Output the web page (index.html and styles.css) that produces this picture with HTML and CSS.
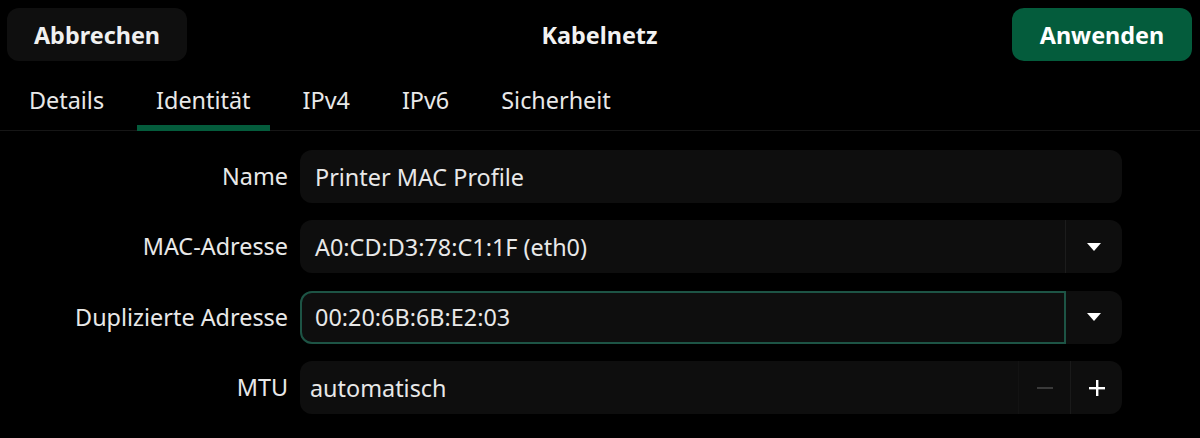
FILE: index.html
```html
<!DOCTYPE html>
<html lang="de">
<head>
<meta charset="utf-8">
<title>Kabelnetz</title>
<link rel="stylesheet" href="styles.css">
</head>
<body>
<div class="window">
  <header class="headerbar">
    <button class="btn btn-cancel">Abbrechen</button>
    <div class="title">Kabelnetz</div>
    <button class="btn btn-apply">Anwenden</button>
  </header>
  <nav class="tabs">
    <div class="tab">Details</div>
    <div class="tab active">Identität</div>
    <div class="tab">IPv4</div>
    <div class="tab">IPv6</div>
    <div class="tab">Sicherheit</div>
  </nav>
  <main class="form">
    <label class="label">Name</label>
    <div class="field"><span class="entry-text">Printer MAC Profile</span></div>

    <label class="label">MAC-Adresse</label>
    <div class="combo">
      <div class="combo-entry"><span class="entry-text">A0:CD:D3:78:C1:1F (eth0)</span></div>
      <div class="combo-btn"><span class="arrow"></span></div>
    </div>

    <label class="label">Duplizierte Adresse</label>
    <div class="combo">
      <div class="combo-entry focused"><span class="entry-text">00:20:6B:6B:E2:03</span></div>
      <div class="combo-btn"><span class="arrow"></span></div>
    </div>

    <label class="label">MTU</label>
    <div class="spin">
      <div class="spin-entry"><span class="entry-text">automatisch</span></div>
      <div class="spin-btn disabled">
        <svg width="16" height="16" viewBox="0 0 16 16"><rect x="0" y="7" width="16" height="2" fill="#3a3a3a"/></svg>
      </div>
      <div class="spin-btn">
        <svg width="16" height="16" viewBox="0 0 16 16"><rect x="0" y="7" width="16" height="2.4" fill="#ffffff"/><rect x="7" y="0" width="2.4" height="16" fill="#ffffff"/></svg>
      </div>
    </div>
  </main>
</div>
</body>
</html>
```

FILE: styles.css
```css
* { box-sizing: border-box; }
html, body {
  margin: 0;
  padding: 0;
  background: #000;
}
body {
  font-family: "Noto Sans", "Open Sans", sans-serif;
  color: #e8e8e8;
  font-size: 23.4px;
  width: 1200px;
  height: 438px;
  overflow: hidden;
}
.window {
  display: flex;
  flex-direction: column;
}
.headerbar {
  display: flex;
  align-items: center;
  justify-content: space-between;
  padding: 8px 8px 0 7px;
  height: 61px;
}
.btn {
  font-family: inherit;
  font-size: 23.4px;
  font-weight: 700;
  border: none;
  border-radius: 12px;
  height: 53px;
  width: 180px;
  color: #fff;
  padding: 0;
  cursor: pointer;
}
.btn-cancel {
  background: #0f0f0f;
  color: #f0f0f0;
}
.btn-apply {
  background: #045c3c;
}
.title {
  font-weight: 700;
  font-size: 23.4px;
  color: #f2f2f2;
}
.tabs {
  display: flex;
  gap: 14px;
  padding: 10px 0 0 10px;
  border-bottom: 1px solid #161616;
  height: 70px;
}
.tab {
  height: 60px;
  line-height: 58px;
  padding: 0 19px;
  border-bottom: 6px solid transparent;
  color: #e8e8e8;
}
.tab.active {
  border-bottom-color: #045c3c;
}
.form {
  display: grid;
  grid-template-columns: 288px 822px;
  grid-auto-rows: 53px;
  column-gap: 12px;
  row-gap: 17.4px;
  padding-top: 19px;
}
.label {
  text-align: right;
  line-height: 53px;
  color: #e8e8e8;
}
.field, .combo, .spin {
  height: 53px;
  border-radius: 12px;
  background: #0e0e0e;
  display: flex;
  align-items: center;
}
.field {
  padding-left: 15px;
}
.combo-entry {
  flex: 1;
  height: 53px;
  display: flex;
  align-items: center;
  padding-left: 15px;
  border-radius: 12px 0 0 12px;
  border-right: 1px solid #1c1c1c;
}
.combo-entry.focused {
  border: 2px solid #1d5445;
  padding-left: 13px;
}
.combo-btn {
  width: 56px;
  height: 53px;
  display: flex;
  align-items: center;
  justify-content: center;
}
.arrow {
  width: 0;
  height: 0;
  border-left: 7px solid transparent;
  border-right: 7px solid transparent;
  border-top: 8px solid #fff;
  margin-right: 1px;
}
.spin-entry {
  flex: 1;
  padding-left: 10px;
  height: 53px;
  display: flex;
  align-items: center;
}
.spin-btn {
  width: 52px;
  height: 53px;
  display: flex;
  align-items: center;
  justify-content: center;
  border-left: 1px solid #1a1a1a;
}
.spin-btn.disabled {
  border-left-color: #131313;
}
```
